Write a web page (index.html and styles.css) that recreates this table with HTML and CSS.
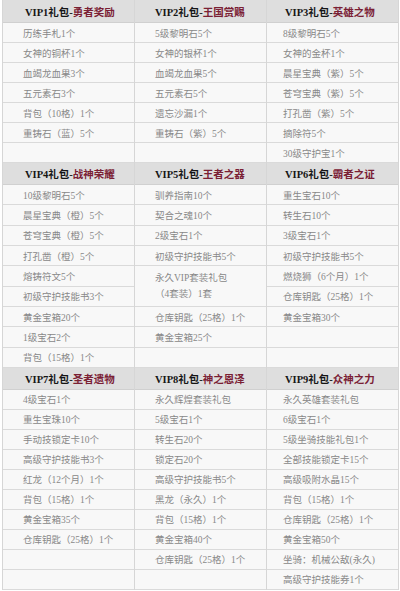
FILE: index.html
```html
<!DOCTYPE html>
<html lang="zh-CN">
<head>
<meta charset="utf-8">
<title>VIP礼包</title>
<link rel="stylesheet" href="styles.css">
</head>
<body>
<div class="gifts">
  <section class="sec s1">
    <div class="col c1">
      <div class="head"><b>VIP1礼包-</b><em>勇者奖励</em></div>
      <div class="cell">历练手札1个</div>
      <div class="cell">女神的铜杯1个</div>
      <div class="cell">血竭龙血果3个</div>
      <div class="cell">五元素石3个</div>
      <div class="cell">背包（10格）1个</div>
      <div class="cell">重铸石（蓝）5个</div>
      <div class="cell"></div>
    </div>
    <div class="col c2">
      <div class="head"><b>VIP2礼包-</b><em>王国赏赐</em></div>
      <div class="cell">5级黎明石5个</div>
      <div class="cell">女神的银杯1个</div>
      <div class="cell">血竭龙血果5个</div>
      <div class="cell">五元素石5个</div>
      <div class="cell">遗忘沙漏1个</div>
      <div class="cell">重铸石（紫）5个</div>
      <div class="cell"></div>
    </div>
    <div class="col c3">
      <div class="head"><b>VIP3礼包-</b><em>英雄之物</em></div>
      <div class="cell">8级黎明石5个</div>
      <div class="cell">女神的金杯1个</div>
      <div class="cell">晨星宝典（紫）5个</div>
      <div class="cell">苍穹宝典（紫）5个</div>
      <div class="cell">打孔凿（紫）5个</div>
      <div class="cell">摘除符5个</div>
      <div class="cell">30级守护宝1个</div>
    </div>
  </section>

  <section class="sec s2">
    <div class="col c1">
      <div class="head"><b>VIP4礼包-</b><em>战神荣耀</em></div>
      <div class="cell">10级黎明石5个</div>
      <div class="cell">晨星宝典（橙）5个</div>
      <div class="cell">苍穹宝典（橙）5个</div>
      <div class="cell">打孔凿（橙）5个</div>
      <div class="cell">熔铸符文5个</div>
      <div class="cell">初级守护技能书3个</div>
      <div class="cell">黄金宝箱20个</div>
      <div class="cell">1级宝石2个</div>
      <div class="cell">背包（15格）1个</div>
    </div>
    <div class="col c2">
      <div class="head"><b>VIP5礼包-</b><em>王者之器</em></div>
      <div class="cell">驯养指南10个</div>
      <div class="cell">契合之魂10个</div>
      <div class="cell">2级宝石1个</div>
      <div class="cell">初级守护技能书5个</div>
      <div class="cell double">永久VIP套装礼包<br>（4套装）1套</div>
      <div class="cell">仓库钥匙（25格）1个</div>
      <div class="cell">黄金宝箱25个</div>
      <div class="cell"></div>
    </div>
    <div class="col c3">
      <div class="head"><b>VIP6礼包-</b><em>霸者之证</em></div>
      <div class="cell">重生宝石10个</div>
      <div class="cell">转生石10个</div>
      <div class="cell">3级宝石1个</div>
      <div class="cell">初级守护技能书5个</div>
      <div class="cell">燃烧狮（6个月）1个</div>
      <div class="cell">仓库钥匙（25格）1个</div>
      <div class="cell">黄金宝箱30个</div>
      <div class="cell"></div>
      <div class="cell"></div>
    </div>
  </section>

  <section class="sec s3">
    <div class="col c1">
      <div class="head"><b>VIP7礼包-</b><em>圣者遗物</em></div>
      <div class="cell">4级宝石1个</div>
      <div class="cell">重生宝珠10个</div>
      <div class="cell">手动技锁定卡10个</div>
      <div class="cell">高级守护技能书3个</div>
      <div class="cell">红龙（12个月）1个</div>
      <div class="cell">背包（15格）1个</div>
      <div class="cell">黄金宝箱35个</div>
      <div class="cell">仓库钥匙（25格）1个</div>
      <div class="cell"></div>
      <div class="cell"></div>
    </div>
    <div class="col c2">
      <div class="head"><b>VIP8礼包-</b><em>神之恩泽</em></div>
      <div class="cell">永久辉煌套装礼包</div>
      <div class="cell">5级宝石1个</div>
      <div class="cell">转生石20个</div>
      <div class="cell">锁定石20个</div>
      <div class="cell">高级守护技能书5个</div>
      <div class="cell">黑龙（永久）1个</div>
      <div class="cell">背包（15格）1个</div>
      <div class="cell">黄金宝箱40个</div>
      <div class="cell">仓库钥匙（25格）1个</div>
      <div class="cell"></div>
    </div>
    <div class="col c3">
      <div class="head"><b>VIP9礼包-</b><em>众神之力</em></div>
      <div class="cell">永久英雄套装礼包</div>
      <div class="cell">6级宝石1个</div>
      <div class="cell">5级坐骑技能礼包1个</div>
      <div class="cell">全部技能锁定卡15个</div>
      <div class="cell">高级吸附水晶15个</div>
      <div class="cell">背包（15格）1个</div>
      <div class="cell">仓库钥匙（25格）1个</div>
      <div class="cell">黄金宝箱50个</div>
      <div class="cell">坐骑：机械公敌(永久)</div>
      <div class="cell">高级守护技能券1个</div>
    </div>
  </section>
</div>
</body>
</html>
```

FILE: styles.css
```css
* { box-sizing: border-box; }

html, body {
  margin: 0;
  padding: 0;
  background: #ffffff;
}

body {
  padding-left: 2px;
  font-family: "Liberation Serif", "Noto Sans CJK SC", serif;
}

.gifts {
  width: 397px;
  border-left: 1px solid #d6d6d6;
}

.sec {
  display: grid;
  grid-template-columns: 132px 132px 132px;
}

.col {
  display: flex;
  flex-direction: column;
  border-right: 1px solid #d6d6d6;
}

.head {
  height: 22px;
  display: flex;
  align-items: center;
  background: #dedede;
  border-bottom: 1px solid #d0d0d0;
  font-size: 10.5px;
  white-space: nowrap;
}

.s1 .head { height: 23px; }

.head b {
  font-weight: bold;
  color: #161616;
}

.head em {
  font-style: normal;
  font-weight: bold;
  color: #7a2034;
}

.cell {
  height: 20px;
  display: flex;
  align-items: center;
  background: #f8f8f8;
  border-bottom: 1px solid #dadada;
  font-size: 9.5px;
  color: #888888;
  white-space: nowrap;
}

.s2 .cell { height: 20.33px; }
.s2 .cell.double {
  height: 40.66px;
  line-height: 16px;
}

.c1 .cell { padding-left: 20px; }
.c2 .cell { padding-left: 20px; }
.c3 .cell { padding-left: 16px; }

.c1 .head { padding-left: 22px; }
.c2 .head { padding-left: 20px; }
.c3 .head { padding-left: 18px; }
```
